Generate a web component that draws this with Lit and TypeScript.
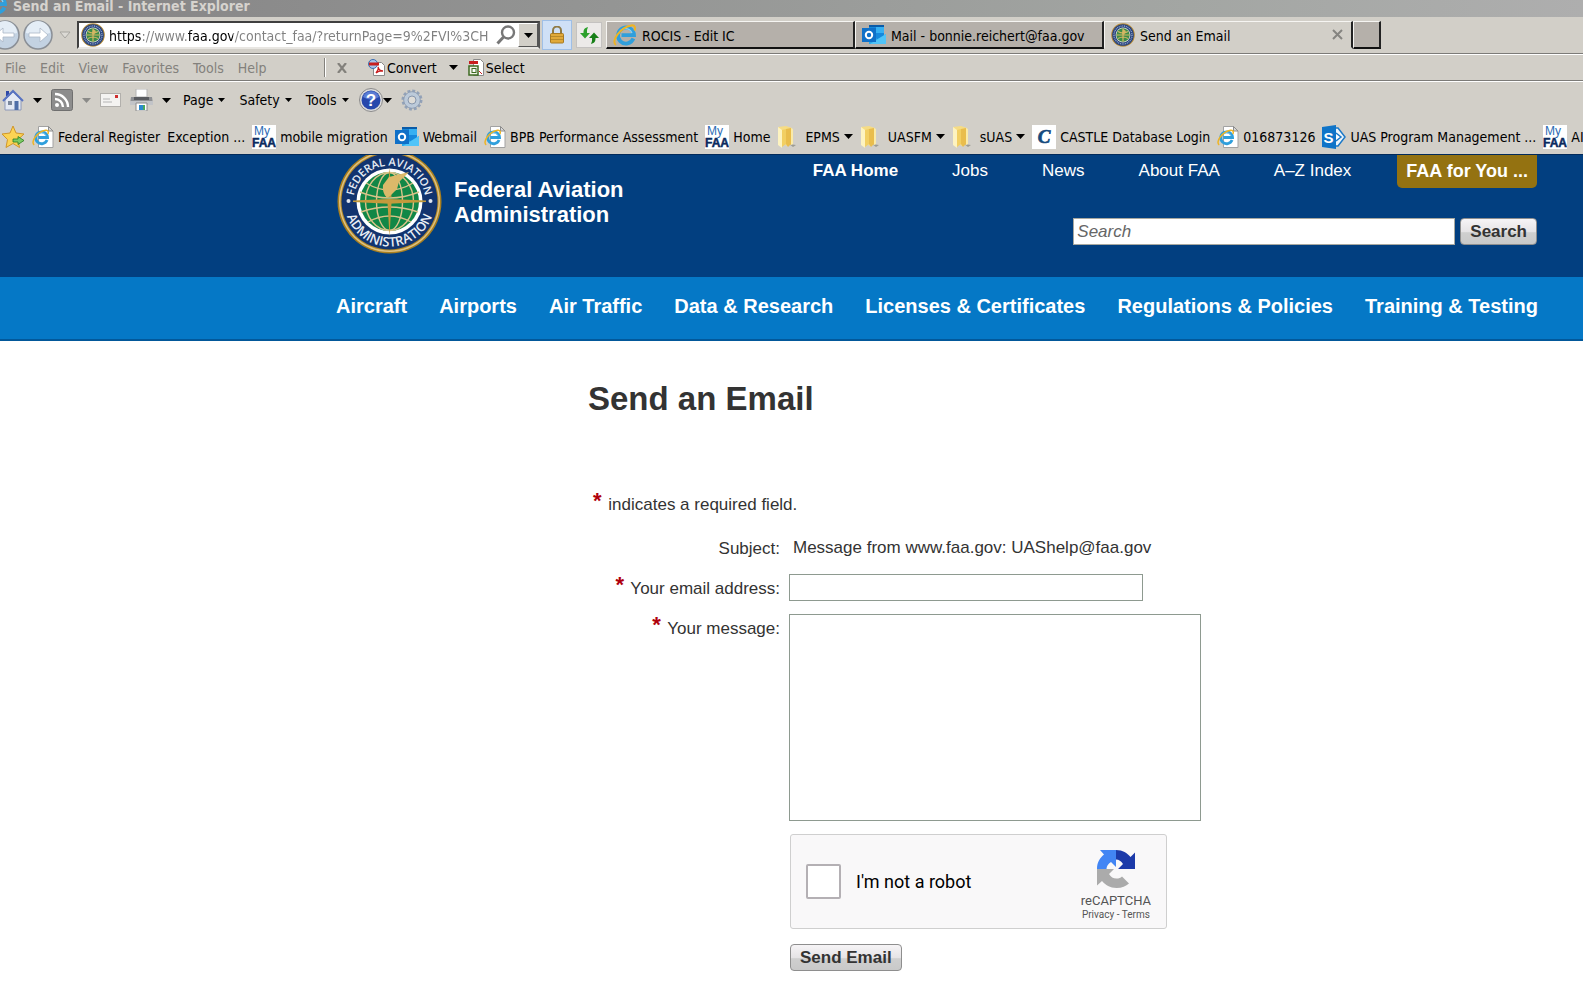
import { LitElement, html, css, svg, TemplateResult } from "lit";
import { customElement } from "lit/decorators.js";

const seal = (cls: string) => html`<svg class=${cls} viewBox="0 0 24 24" aria-hidden="true">
  <circle cx="12" cy="12" r="11.8" fill="#b58a35" /><circle cx="12" cy="12" r="10.8" fill="#24407c" />
  <circle cx="12" cy="12" r="9" fill="none" stroke="#8fa3c6" stroke-width="1.4" stroke-dasharray="1 .8" />
  <circle cx="12" cy="12" r="7.4" fill="#e6e4d6" /><circle cx="12" cy="12" r="6.7" fill="#3c8c48" />
  <path d="M5.5 12h13M12 5.5v13M7 8.5q5 3 10 0M7 15.5q5-3 10 0" stroke="#d4b763" stroke-width="1.2" fill="none" />
  <path d="M12 6l3 2-2 4-2-1z" fill="#d4b763" />
</svg>`;

const ieMark = svg`<path d="M20.400 15.600a8 8 0 1 1 .6-3.400H8.500" fill="none" stroke="#2f9fdc" stroke-width="3.800" />
  <path d="M6 10a7 7 0 0 1 13 0" fill="none" stroke="#8fd2f4" stroke-width="1.200" />
  <path d="M3 22C-2.500 18.500 7 4.200 18.500 2.400c4-.4 4 3.200 2.800 5.200" fill="none" stroke="#efb422" stroke-width="2" />`;

const ieIcon = html`<svg class="i24" viewBox="0 0 24 24" aria-hidden="true">${ieMark}</svg>`;

const iePage = html`<svg class="i22" viewBox="0 0 22 22" aria-hidden="true">
  <path d="M6.500 .500h10l4.500 4.500v16.500H6.500z" fill="#fff" stroke="#a2a2a2" />
  <path d="M16.500 .500v4.500H21z" fill="#d8d8d8" stroke="#8c8c8c" />
  <g transform="translate(0 2.500) scale(.74)">${ieMark}</g>
</svg>`;

const myFaa = html`<svg class="i24" viewBox="0 0 24 24" aria-hidden="true">
  <rect width="24" height="24" fill="#fff" />
  <text x="2" y="10" font-family="Liberation Sans" font-size="12" fill="#2c6cb4">My</text>
  <text x="12" y="22" text-anchor="middle" font-family="Liberation Sans" font-weight="bold" font-size="12" fill="#0a2a5e" stroke="#0a2a5e" stroke-width=".5">FAA</text>
</svg>`;

const outlook = html`<svg class="i24" viewBox="0 0 24 24" aria-hidden="true">
  <path d="M7 2h15v14H7z" fill="#1588dc" /><path d="M7 2h15v2H7z" fill="#0a5ba8" /><path d="M14 4h8v6h-8z" fill="#36b0f2" />
  <path d="M7 12l8.500 4 8.500-5v10H7z" fill="#28a8ea" /><path d="M8 21l16-10v10z" fill="#50c4f8" />
  <rect y="5" width="14" height="14" fill="#0f70c8" />
  <circle cx="7" cy="12" r="3.200" fill="none" stroke="#fff" stroke-width="2" />
</svg>`;

const folder = html`<svg class="folder-icon" viewBox="0 0 20 24" aria-hidden="true">
  <path d="M12 19l7 1-3 2z" fill="#9b9b94" />
  <path d="M1 2l8-1 6 2v16l-6 2z" fill="#f6dc84" /><path d="M1 2l4 3v18l-4-3z" fill="#fdf3c0" />
  <path d="M5 5l4-1v15l-4 3z" fill="#f2cf62" /><path d="M9 4l5-1v16l-3 3-2-3z" fill="#e9bd4c" /><path d="M14 3l2 1v15l-2 1z" fill="#faeaa8" />
</svg>`;

const castle = html`<svg class="i24" viewBox="0 0 24 24" aria-hidden="true">
  <rect width="24" height="24" fill="#fff" />
  <text x="12" y="17.500" text-anchor="middle" font-family="Liberation Serif" font-style="italic" font-weight="bold" font-size="19" fill="#14497c" stroke="#14497c" stroke-width=".7">C</text>
</svg>`;

const sharepoint = html`<svg class="i24" viewBox="0 0 24 24" aria-hidden="true">
  <path d="M12 3h4l7 9-7 9h-4" fill="#eef6fc" stroke="#1a78c8" stroke-width="1.500" />
  <path d="M14 8l5 4-5 4" fill="#fff" stroke="#1a78c8" stroke-width="1.500" />
  <path d="M0 2l14-2v24L0 22z" fill="#0f74c8" />
  <text x="6.500" y="17.500" text-anchor="middle" font-family="Liberation Sans" font-weight="bold" font-size="15" fill="#fff">S</text>
</svg>`;

const tri = (cls = "") => html`<svg class="tri ${cls}" viewBox="0 0 9 5" aria-hidden="true"><path d="M0 0h9L4.500 5z" fill="currentColor" /></svg>`;

const arrow = (left: boolean) => html`<svg class="nav-disc" viewBox="0 0 30 30" aria-hidden="true">
  <circle cx="15" cy="15" r="14" fill="#c3d2e2" stroke="#8a8f96" stroke-width="1.500" />
  <path d="M3 13a12 12 0 0 1 24 0q-12 4-24 0z" fill="#e4edf6" />
  <path d=${left ? "M5 15l8-7v5h11v4H13v5z" : "M25 15l-8-7v5H6v4h11v5z"} fill="#fff" stroke="#a9b6c6" stroke-width=".8" />
</svg>`;

type Favorite = { icon?: TemplateResult; label: string; menu?: boolean };

const favorites: Favorite[] = [
  { icon: iePage, label: "Federal Register" },
  { label: "Exception ..." },
  { icon: myFaa, label: "mobile migration" },
  { icon: outlook, label: "Webmail" },
  { icon: iePage, label: "BPB Performance Assessment" },
  { icon: myFaa, label: "Home" },
  { icon: folder, label: "EPMS", menu: true },
  { icon: folder, label: "UASFM", menu: true },
  { icon: folder, label: "sUAS", menu: true },
  { icon: castle, label: "CASTLE Database Login" },
  { icon: iePage, label: "016873126" },
  { icon: sharepoint, label: "UAS Program Management ..." },
  { icon: myFaa, label: "AIT" },
];

@customElement("browser-chrome")
class BrowserChrome extends LitElement {
  static styles = css`
    :host { display: block; background: #d2cfc8; color: #000; font: 14px/20px "DejaVu Sans Condensed", "Noto Sans", sans-serif; white-space: nowrap; overflow: hidden; }
    * { box-sizing: border-box; }
    svg { display: block; flex: none; }
    button { font: inherit; color: inherit; background: none; border: 0; padding: 0; display: flex; align-items: center; flex: none; }
    a { color: inherit; text-decoration: none; display: flex; align-items: center; flex: none; }
    .i22 { width: 22px; height: 22px; }
    .i24 { width: 24px; height: 24px; }
    .folder-icon { width: 20px; height: 24px; }
    .tri { width: 9px; height: 5px; }
    .tri.small { width: 7px; height: 4px; }
    .tri.muted { color: #8a8a88; }
    .title { display: flex; align-items: flex-start; height: 17px; background: linear-gradient(90deg, #848384, #a3a6a3 75%, #aeaeae); color: #d6d3ce; font-weight: bold; }
    .title svg { width: 8px; height: 14px; }
    .title span { margin-left: 5px; line-height: 12px; }
    .tabs-row { display: flex; align-items: center; height: 37px; border-bottom: 1px solid #7c7b78; }
    .discs { display: flex; gap: 3px; margin-left: -10px; }
    .nav-disc { width: 30px; height: 30px; }
    .recent { width: 24px; justify-content: center; color: #b4b2ad; }
    .address { display: flex; align-items: center; width: 463px; height: 28px; flex: none; background: #fff; border: 2px solid #404040; border-right-color: #555; border-bottom-color: #e8e6e2; padding-left: 2px; }
    .address .site { width: 24px; height: 24px; flex: none; }
    .address input { flex: 1; min-width: 0; margin-left: 4px; padding: 2px 0 0; border: 0; outline: 0; font: inherit; color: transparent; background: linear-gradient(90deg, #000 33px, #808080 33px, #808080 79px, #000 79px, #000 124px, #808080 124px); -webkit-background-clip: text; background-clip: text; }
    .address .glass { width: 20px; height: 20px; margin: 0 2px; }
    .address .drop { width: 20px; height: 24px; justify-content: center; background: #d2cfc8; border: 1px solid #fff; border-right-color: #555; border-bottom-color: #555; }
    .lock { width: 30px; height: 30px; margin-left: 2px; justify-content: center; background: #cfe0f6; border: 1px solid #9fbfe6; }
    .refresh { width: 26px; height: 26px; margin: 0 4px; justify-content: center; background: #eceae8; border: 1px solid #c4c2c0; }
    .tab { width: 249px; height: 28px; padding-left: 6px; background: #b5b0aa; border: 1px solid #f6f5f2; border-right: 2px solid #222; border-bottom: 2px solid #111; flex: 0 1 249px; min-width: 0; }
    .tab span { margin-left: 5px; padding-top: 2px; flex: 1; text-align: left; }
    .tab.active { background: none; border-bottom-color: transparent; border-right-color: #222; }
    .tab .close { width: 11px; height: 11px; margin-right: 8px; }
    .new-tab { width: 28px; height: 28px; background: #b5b0aa; border: 1px solid #f6f5f2; border-right: 2px solid #222; border-bottom: 2px solid #111; }
    .menu { display: flex; align-items: center; height: 27px; border-top: 1px solid #fff; border-bottom: 1px solid #7c7b78; padding-left: 5px; }
    .menu nav { display: flex; gap: 14px; color: #83817c; width: 319px; flex: none; }
    .sep { width: 2px; height: 19px; background: #83817c; border-right: 1px solid #fff; flex: none; }
    .menu .close { width: 10px; height: 10px; margin: 0 21px 0 11px; }
    .menu button { gap: 2px; }
    .menu .more { margin: 0 10px 0 12px; }
    .tools { display: flex; align-items: center; height: 37px; border-top: 1px solid #fff; padding-left: 2px; }
    .tools .gap { margin-left: 9px; }
    .tools .words { display: flex; gap: 14px; margin-left: 12px; margin-right: 10px; }
    .words button { gap: 5px; }
    .favs { display: flex; align-items: center; height: 36px; gap: 7px; padding: 1px 0 0 2px; }
    .favs a { gap: 4px; }
    .favs .folder-icon { margin-right: 4px; }
  `;

  render() {
    return html`
      <div class="title">
        <svg viewBox="16 8 8 14" aria-hidden="true">${ieMark}</svg><span>Send an Email - Internet Explorer</span>
      </div>
      <div class="tabs-row">
        <div class="discs">
          <button aria-label="Back">${arrow(true)}</button>
          <button aria-label="Forward">${arrow(false)}</button>
        </div>
        <button class="recent" aria-label="Recent pages"><svg width="12" height="8" viewBox="0 0 12 8"><path d="M1 1h10L6 7z" fill="#dcdad5" stroke="#a8a6a1" /></svg></button>
        <div class="address">
          ${seal("site")}
          <input aria-label="Address" value="https://www.faa.gov/contact_faa/?returnPage=9%2FVI%3CH" />
          <svg class="glass" viewBox="0 0 20 20" aria-hidden="true"><circle cx="12" cy="7.500" r="6" fill="none" stroke="#777" stroke-width="2.400" /><path d="M7.500 12L1.500 18.500" stroke="#777" stroke-width="3" /></svg>
          <button class="drop" aria-label="Show address list">${tri()}</button>
        </div>
        <button class="lock" aria-label="Security report">
          <svg width="14" height="18" viewBox="0 0 14 18"><path d="M3 8V4.500a4 4 0 0 1 8 0V8" fill="none" stroke="#8f7a45" stroke-width="2" /><rect x=".5" y="7.500" width="13" height="9.500" rx="1" fill="#e0a93a" stroke="#a87a22" /><path d="M1 10.500h12M1 13.500h12" stroke="#b88a2c" /></svg>
        </button>
        <button class="refresh" aria-label="Refresh">
          <svg width="19" height="17" viewBox="0 0 19 17"><path d="M8 0C4 1 3.500 3 3.500 6H0l5 5.500L10 6H7q-.5-3 1-6z" fill="#2ca02c" /><path d="M11 17c4-1 4.500-3 4.500-6H19l-5-5.500L9 11h3q.5 3-1 6z" fill="#188018" /></svg>
        </button>
        <button class="tab">${ieIcon}<span>ROCIS - Edit IC</span></button>
        <button class="tab">${outlook}<span>Mail - bonnie.reichert@faa.gov</span></button>
        <button class="tab active">${seal("i24")}<span>Send an Email</span>
          <svg class="close" viewBox="0 0 11 11"><path d="M1 1l9 9M10 1l-9 9" stroke="#858480" stroke-width="2" /></svg></button>
        <button class="new-tab" aria-label="New tab"></button>
      </div>
      <div class="menu">
        <nav>
          ${["File", "Edit", "View", "Favorites", "Tools", "Help"].map((m) => html`<button>${m}</button>`)}
        </nav>
        <span class="sep"></span>
        <svg class="close" viewBox="0 0 10 10"><path d="M1 0l8 10M9 0L1 10" stroke="#83817c" stroke-width="2.200" /></svg>
        <button>
          <svg width="17" height="17" viewBox="0 0 17 17"><path d="M5.500 3.500h8l3 3v10h-11z" fill="#fff" stroke="#8a8a8a" /><circle cx="5" cy="5" r="4.500" fill="#a8c4e8" stroke="#3a6cb0" /><rect x="1" y="3.500" width="10" height="3" fill="#c81e1e" /><path d="M8 14q3-4 2-6 1 4 5 4-4-.5-7 2z" fill="none" stroke="#c81e1e" stroke-width="1.300" /></svg>
          Convert
        </button>
        <button class="more" aria-label="Convert options">${tri()}</button>
        <button>
          <svg width="16" height="17" viewBox="0 0 16 17"><path d="M5.500 .500h7l3 3v13h-10z" fill="#fff" stroke="#8a8a8a" /><rect x="1" y="2" width="9" height="3" fill="#c81e1e" /><rect x="1" y="7" width="9" height="9" fill="#f3f3e8" stroke="#3c6a20" stroke-width="1.500" /><rect x="4" y="9.500" width="4" height="4" fill="#fff" stroke="#3c6a20" /><path d="M11 12l3 3" stroke="#c81e1e" /></svg>
          Select
        </button>
      </div>
      <div class="tools">
        <button aria-label="Home"><svg width="22" height="22" viewBox="0 0 22 22"><path d="M4 2h3v5H4z" fill="#2f49a8" /><path d="M3 11l8-8 8 8v10H3z" fill="#e4e9f4" stroke="#8c98b8" /><path d="M1 12L11 2l10 10" fill="none" stroke="#5873c2" stroke-width="2" /><path d="M6 12h4v4H6z" fill="#7a879c" /><path d="M12.500 12h4v9h-4z" fill="#4f6ea8" /></svg></button>
        <button class="gap" aria-label="Home options">${tri()}</button>
        <button class="gap" aria-label="Feeds"><svg width="22" height="22" viewBox="0 0 22 22"><rect x=".5" y=".5" width="21" height="21" rx="2" fill="#8d8d8d" stroke="#6f6f6f" /><circle cx="6" cy="16" r="2" fill="#fff" /><path d="M4 10a8 8 0 0 1 8 8M4 5a13 13 0 0 1 13 13" fill="none" stroke="#fff" stroke-width="2.400" /></svg></button>
        <button class="gap" aria-label="Feed options">${tri("muted")}</button>
        <button class="gap" aria-label="Read mail"><svg width="21" height="16" viewBox="0 0 21 16"><rect x=".5" y="1.500" width="20" height="13" fill="#f4f3f1" stroke="#b2b0ac" /><path d="M3 7h7M3 10h9" stroke="#b4b4b4" /><rect x="15" y="3" width="3" height="3" fill="#d03030" /></svg></button>
        <button class="gap" aria-label="Print"><svg width="23" height="22" viewBox="0 0 23 22"><path d="M6 0h11v8H6z" fill="#fff" stroke="#b5b5b5" /><path d="M1 8h21l1 7H0z" fill="#8e9094" /><path d="M0 12h23v4H0z" fill="#c2c4c8" /><path d="M4 8h15v3H4z" fill="#5a5c60" /><path d="M6 14h11v8H6z" fill="#fff" stroke="#8c8c8c" /><path d="M9 16h4v5H9z" fill="#2c8ad0" /><path d="M13 16h2v5h-2z" fill="#4aa860" /></svg></button>
        <button class="gap" aria-label="Print options">${tri()}</button>
        <div class="words">
          ${["Page", "Safety", "Tools"].map((m) => html`<button>${m}${tri("small")}</button>`)}
        </div>
        <button aria-label="Help"><svg width="24" height="24" viewBox="0 0 24 24"><circle cx="12" cy="12" r="11.500" fill="#dcdcdc" stroke="#8a8a8a" /><circle cx="12" cy="12" r="9.500" fill="#2748ac" /><path d="M4 9a8.500 8.500 0 0 1 16 0q-8 5-16 0z" fill="#5b7cd4" /><text x="12" y="18" text-anchor="middle" font-family="Liberation Sans" font-weight="bold" font-size="17" fill="#fff">?</text></svg></button>
        <button aria-label="Help options">${tri()}</button>
        <button class="gap" aria-label="Settings"><svg width="22" height="22" viewBox="0 0 22 22"><circle cx="11" cy="11" r="9" fill="none" stroke="#93a2b8" stroke-width="3" stroke-dasharray="2.800 1.910" /><circle cx="11" cy="11" r="6" fill="none" stroke="#bccada" stroke-width="4.500" /><circle cx="11" cy="11" r="8.300" fill="none" stroke="#8797ae" stroke-width=".8" /><circle cx="11" cy="11" r="4" fill="#dedcd8" stroke="#8797ae" /></svg></button>
      </div>
      <div class="favs">
        <button aria-label="Add to favorites"><svg width="23" height="24" viewBox="0 0 23 24"><path d="M11 1l3 7 8 1-6 5.500 1.500 8L11 18.500l-7 4 1.500-8L0 9l8-1z" fill="#fbd354" stroke="#d0962a" /><path d="M11 14h5v-2.500l6 4-6 4V17h-5z" fill="#7ccb64" stroke="#2c7c20" stroke-width=".8" /></svg></button>
        ${favorites.map((f) => html`<a href="#">${f.icon}<span>${f.label}</span>${f.menu ? tri() : ""}</a>`)}
      </div>
    `;
  }
}

@customElement("faa-site")
class FaaSite extends LitElement {
  static styles = css`
    :host { display: block; background: #fff; color: #333; font: 17px/20px "Liberation Sans", Arial, sans-serif; }
    * { box-sizing: border-box; }
    a { color: inherit; text-decoration: none; }
    svg { display: block; flex: none; }
    .head { display: flex; justify-content: space-between; height: 123px; padding: 0 46px 0 337px; background: #023f80; border-top: 1px solid #022a5a; color: #fff; }
    .brand { display: flex; align-items: flex-start; gap: 12px; font-size: 22px; line-height: 25px; font-weight: bold; }
    .brand span { padding-top: 22px; }
    .logo { width: 105px; height: 99px; }
    .right { display: flex; flex-direction: column; align-items: flex-end; gap: 30px; }
    .links { display: flex; }
    .links a { padding: 6px 0 7px; margin-right: 54px; }
    .links .strong { font-weight: bold; }
    .links .you { margin: 0 0 0 -8px; padding: 6px 9px 7px; font-size: 18px; font-weight: bold; background: #947211; border-radius: 0 0 5px 5px; }
    .search { display: flex; gap: 5px; align-self: flex-end; }
    .search input { width: 382px; height: 27px; padding: 0 3px; border: 1px solid #a8a8a0; font: inherit; background: #fff; }
    .search input::placeholder { color: #666; font-style: italic; opacity: 1; }
    .btn { height: 27px; padding: 0 9px; font: bold 17px/20px "Liberation Sans", Arial, sans-serif; color: #333; border: 1px solid #8e8e8e; border-radius: 4px; background: linear-gradient(#f6f4f6, #e6e4e6 50%, #cfcfcf 55%, #c9c9c9); }
    .nav { display: flex; justify-content: space-between; height: 64px; padding: 17px 45px 0 336px; background: #0578c6; border-bottom: 2px solid #02589a; color: #fff; font-size: 20px; line-height: 24px; font-weight: bold; }
    .main { padding: 38px 46px 20px 588px; }
    h1 { margin: 0; font-size: 33px; line-height: 40px; font-weight: bold; }
    .req { color: #b0000c; font-weight: bold; font-size: 22px; line-height: 0; vertical-align: 2px; margin-right: 2px; }
    .note { margin: 76px 0 19px 5px; }
    .form { display: grid; grid-template-columns: 192px 1fr; column-gap: 9px; row-gap: 13px; align-items: start; }
    .form label, .lab { text-align: right; padding-top: 5px; }
    .subject { padding: 4px 0 0 4px; height: 27px; }
    .subject + label, .lab { min-height: 27px; }
    .email { width: 354px; height: 27px; border: 1px solid #8e9a90; }
    .message { display: block; width: 412px; height: 207px; border: 1px solid #8e9a90; resize: none; }
    .email, .message { background: #fff; margin: 0; }
    .captcha { grid-column: 2; display: flex; justify-content: space-between; align-items: center; width: 377px; height: 95px; margin-left: 1px; padding: 0 15px; background: #f9f8f9; border: 1px solid #cfcfcf; border-radius: 3px; font-family: Roboto, sans-serif; color: #000; }
    .captcha .tick { display: flex; align-items: center; gap: 15px; text-align: left; font-size: 18px; padding: 0; }
    .captcha input { appearance: none; width: 35px; height: 35px; margin: 0; background: #fff; border: 2px solid #b4b0b4; border-radius: 2px; }
    .badge { display: flex; flex-direction: column; align-items: center; color: #555; font-size: 13px; line-height: 16px; padding-top: 5px; }
    .badge svg { width: 40px; height: 40px; margin-bottom: 4px; }
    .badge small { font-size: 10px; line-height: 11px; }
    .send { grid-column: 2; justify-self: start; margin: 2px 0 0 1px; }
  `;

  private logo() {
    return html`<svg class="logo" viewBox="0 6 105 99" role="img" aria-label="FAA seal">
      <defs>
        <path id="top" d="M18 63a36 36 0 1 1 69 0" />
        <path id="bottom" d="M7.500 52.500a45 45 0 0 0 90 0" />
      </defs>
      <circle cx="52.500" cy="52.500" r="52" fill="#a97f1e" /><circle cx="52.500" cy="52.500" r="50.500" fill="#dcc184" /><circle cx="52.500" cy="52.500" r="49" fill="#b58a26" />
      <circle cx="52.500" cy="52.500" r="48" fill="#12346f" /><circle cx="52.500" cy="52.500" r="33" fill="#fff" /><circle cx="52.500" cy="52.500" r="29.500" fill="#118746" />
      <g fill="none" stroke="#d9c38a" stroke-width="1.400">
        <ellipse cx="52.500" cy="52.500" rx="13" ry="29" /><ellipse cx="52.500" cy="52.500" rx="24" ry="29" />
        <path d="M29 34q23.500 14 47 0M23 43q29.500 12 59 0M24 63q28-10 57 0M31 73q21.500-12 43 0" />
      </g>
      <path d="M16 51.500l36-1.500 37 1.500v1.500l-37 1.800-36-1.800z" fill="#c39a3c" />
      <path d="M50.500 48l2-30 2 30zM50.500 54h4l-1 16-1 18-1-18z" fill="#c39a3c" />
      <path d="M46 36l6-8 20-5-10 10-2 7-7 7-3 2q-5-5-4-13z" fill="#dcb96a" />
      <circle cx="11.500" cy="52" r="2" fill="#dfe5f0" /><circle cx="93.500" cy="52" r="2" fill="#dfe5f0" />
      <g fill="#e8edf5" font-family="Open Sans, sans-serif" font-weight="600">
        <text text-anchor="middle" font-size="11"><textPath href="#top" startOffset="50%">FEDERAL AVIATION</textPath></text>
        <text text-anchor="middle" font-size="13"><textPath href="#bottom" startOffset="50%">ADMINISTRATION</textPath></text>
      </g>
    </svg>`;
  }

  render() {
    const star = html`<span class="req">*</span>`;
    return html`
      <header class="head">
        <a class="brand" href="#">${this.logo()}<span>Federal Aviation<br />Administration</span></a>
        <div class="right">
          <nav class="links">
            <a class="strong" href="#">FAA Home</a><a href="#">Jobs</a><a href="#">News</a><a href="#">About FAA</a><a href="#">A–Z Index</a>
            <a class="you" href="#">FAA for You ...</a>
          </nav>
          <form class="search"><input type="search" aria-label="Search" placeholder="Search" /><button class="btn" type="button">Search</button></form>
        </div>
      </header>
      <nav class="nav">
        ${["Aircraft", "Airports", "Air Traffic", "Data & Research", "Licenses & Certificates", "Regulations & Policies", "Training & Testing"].map((t) => html`<a href="#">${t}</a>`)}
      </nav>
      <main class="main">
        <h1>Send an Email</h1>
        <p class="note">${star} indicates a required field.</p>
        <form class="form">
          <div class="lab">Subject:</div>
          <div class="subject">Message from www.faa.gov: UAShelp@faa.gov</div>
          <label for="email">${star} Your email address:</label>
          <input class="email" id="email" type="email" />
          <label for="message">${star} Your message:</label>
          <textarea class="message" id="message"></textarea>
          <div class="captcha">
            <label class="tick"><input type="checkbox" />I'm not a robot</label>
            <div class="badge">
              <svg viewBox="0 0 40 40" aria-hidden="true">
                <path d="M20 1c7 0 11 3 14.500 7L39 3.500V20H22l5-5c-2-3-4-4.500-7-4.500z" fill="#1c3aa9" />
                <path d="M20 1v17l-5-5c-3 2-4.500 4-4.500 7H1C1 13 4 9 8 5.500L4 1z" fill="#4285f4" />
                <path d="M1 20h17l-5 5c2 3 4 4.500 7.500 4.500 2.500 0 4-.5 5.500-2l7 7C30 37 26 39 20.500 39 14 39 9.500 36 6 32l-5 4.500z" fill="#ababab" />
              </svg>
              reCAPTCHA
              <small><a href="#">Privacy</a> - <a href="#">Terms</a></small>
            </div>
          </div>
          <button class="btn send" type="button">Send Email</button>
        </form>
      </main>
    `;
  }
}

@customElement("app-root")
class AppRoot extends LitElement {
  static styles = css`
    :host { display: block; min-height: 100vh; background: #fff; overflow: hidden; }
  `;

  render() {
    return html`<browser-chrome></browser-chrome><faa-site></faa-site>`;
  }
}
